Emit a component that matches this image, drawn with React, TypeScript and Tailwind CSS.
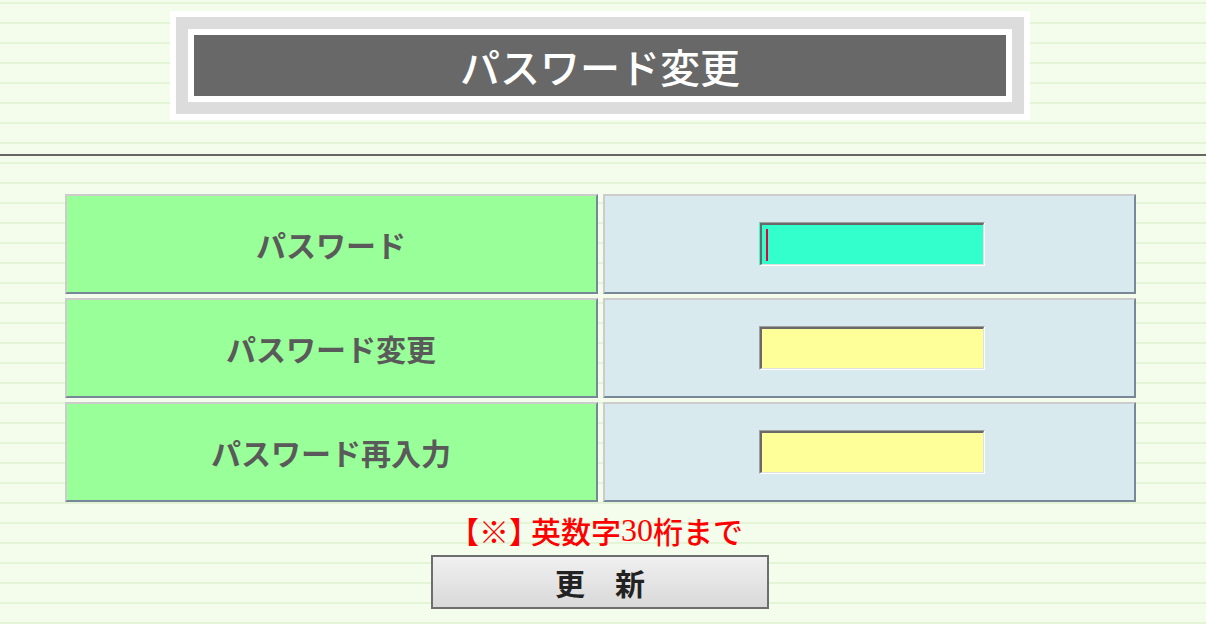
import React from "react";

const jp = { fontFamily: '"Noto Sans CJK JP", "Noto Sans", sans-serif' };

function Field({ focused }: { focused?: boolean }) {
  return (
    <div
      className={`w-[226px] h-[44px] border border-t-[#a0a0a0] border-r-white border-b-white ${
        focused ? "border-l-[#33ffcc]" : "border-l-[#a0a0a0]"
      }`}
    >
      <div
        className={`relative w-full h-full border-t-2 border-l-2 border-b border-r border-t-[#696969] border-l-[#696969] border-b-[#e0e0e0] border-r-[#e0e0e0] ${
          focused ? "bg-[#33ffcc]" : "bg-[#ffff99]"
        }`}
      >
        {focused && <div className="absolute left-[4px] top-[4px] w-[2px] h-[32px] bg-[#e4003a]" />}
      </div>
    </div>
  );
}

function Row({ label, focused }: { label: string; focused?: boolean }) {
  return (
    <div className="flex gap-[5px]">
      <div className="w-[533px] h-[100px] flex items-center justify-center bg-[#99ff99] border-2 border-t-[#cccccc] border-l-[#cccccc] border-b-[#778899] border-r-[#778899]">
        <span className="text-[30px] font-bold text-[#5a5a5a] leading-none">{label}</span>
      </div>
      <div className="w-[533px] h-[100px] flex items-center justify-center pl-[6px] bg-[#d9eaee] border-2 border-t-[#cccccc] border-l-[#cccccc] border-b-[#778899] border-r-[#778899]">
        <Field focused={focused} />
      </div>
    </div>
  );
}

export default function App() {
  return (
    <div
      style={jp}
      className="w-full min-h-[624px] overflow-hidden bg-[repeating-linear-gradient(to_bottom,#f4fdec_0px,#f4fdec_2px,#e4f5d7_2px,#e4f5d7_4px,#f4fdec_4px,#f4fdec_20px)]"
    >
      <div className="flex justify-center pt-[11px] pr-[6px]">
        <div className="w-[860px] border-[6px] border-white bg-[#dcdcdc] p-[12px]">
          <div className="border-[6px] border-white bg-[#686868] h-[73px] flex items-center justify-center">
            <span className="text-[40px] font-medium text-white leading-none">パスワード変更</span>
          </div>
        </div>
      </div>
      <div className="mt-[34px] h-[2px] bg-[#666666]" />
      <div className="mt-[38px] flex flex-col items-center gap-[4px] pr-[6px]">
        <Row label="パスワード" focused />
        <Row label="パスワード変更" />
        <Row label="パスワード再入力" />
      </div>
      <div className="mt-[10px] h-[36px] flex items-center justify-center pr-[14px] text-[30px] leading-none text-[#ff0000] font-medium">
        <span className="mr-[-8px]">【※】</span>
        <span>英数字</span>
        <span style={{ fontFamily: '"Liberation Serif", serif' }} className="font-normal text-[32px]">30</span>
        <span>桁まで</span>
      </div>
      <div className="mt-[7px] flex justify-center pr-[6px]">
        <button className="w-[338px] h-[54px] border-2 border-[#6e6e6e] bg-[linear-gradient(to_bottom,#f0f0f0,#d9d9d9)] flex items-center justify-center text-[30px] font-bold text-[#222222] leading-none">
          更　新
        </button>
      </div>
    </div>
  );
}
